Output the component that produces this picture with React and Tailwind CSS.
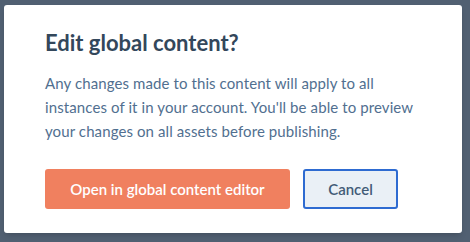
export default function App() {
  return (
    <div className="h-[242px] w-[470px] overflow-hidden bg-[#516072] pt-[5px] pl-[4px] font-['Lato',sans-serif]">
      <div className="flex h-[228px] w-[458px] flex-col rounded-[3px] bg-white pl-[41px] pt-[24px] shadow-md">
        <h1 className="text-[22px] leading-[28px] font-bold text-[#33475b]">
          Edit global content?
        </h1>
        <p className="mt-[14px] w-[380px] text-[15px] leading-[24px] tracking-[0.1px] text-[#516f90]">
          Any changes made to this content will apply to all instances of it in
          your account. You'll be able to preview your changes on all assets
          before publishing.
        </p>
        <div className="mt-[26px] flex gap-[13px]">
          <button className="h-[40px] w-[245px] rounded-[3px] bg-[#f0805f] text-[15px] font-semibold text-white">
            Open in global content editor
          </button>
          <button className="h-[40px] w-[95px] rounded-[3px] border-2 border-[#2e6bd1] bg-[#eaf0f6] text-[15px] font-semibold text-[#425b76]">
            Cancel
          </button>
        </div>
      </div>
    </div>
  );
}
